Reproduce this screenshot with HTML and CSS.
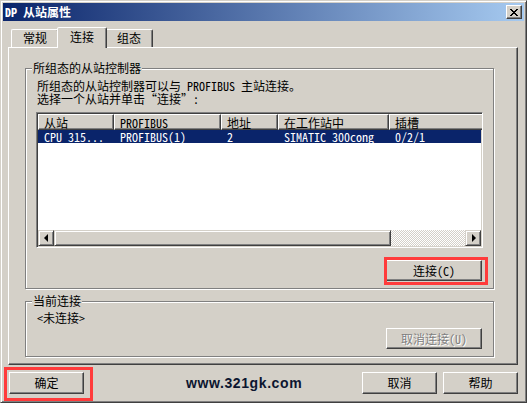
FILE: index.html
```html
<!doctype html>
<html lang="zh-CN">
  <head>
    <meta charset="UTF-8" />
    <title>DP 从站属性</title>
    <link rel="stylesheet" href="styles.css">
  </head>
  <body>
    <div class="window">
      <div class="titlebar">
        <span class="title">DP 从站属性</span>
        <span class="close">
          <svg width="8" height="7" viewBox="0 0 8 7"><path d="M0 0L7 7M7 0L0 7M1 0L8 7M8 0L1 7" stroke="#000" stroke-width="1"/></svg>
        </span>
      </div>

      <div class="tabs">
        <div class="tab tab-first">常规</div>
        <div class="tab active">连接</div>
        <div class="tab">组态</div>
      </div>

      <div class="panel">
        <div class="group group-slaves">
          <span class="legend">所组态的从站控制器</span>
          <p class="info">所组态的从站控制器可以与 PROFIBUS 主站连接。</p>
          <p class="info">选择一个从站并单击“连接”:</p>

          <div class="list">
            <div class="list-head">
              <span class="col c1">从站</span>
              <span class="col c2">PROFIBUS</span>
              <span class="col c3">地址</span>
              <span class="col c4">在工作站中</span>
              <span class="col c5">插槽</span>
            </div>
            <div class="list-row selected">
              <span class="col c1">CPU 315...</span>
              <span class="col c2">PROFIBUS(1)</span>
              <span class="col c3">2</span>
              <span class="col c4">SIMATIC 300cong</span>
              <span class="col c5">0/2/1</span>
            </div>
            <div class="list-fill"></div>
            <div class="hscroll">
              <span class="sb-btn"><i class="arrow arrow-left"></i></span>
              <span class="sb-thumb"></span>
              <span class="sb-track"></span>
              <span class="sb-btn"><i class="arrow arrow-right"></i></span>
            </div>
          </div>

          <div class="actions">
            <button class="btn btn-wide">连接(C)</button>
          </div>
        </div>

        <div class="group group-current">
          <span class="legend">当前连接</span>
          <p class="status">&lt;未连接&gt;</p>
          <div class="actions">
            <button class="btn btn-wide" disabled>取消连接(U)</button>
          </div>
        </div>
      </div>

      <div class="footer">
        <button class="btn btn-ok">确定</button>
        <span class="watermark">www.321gk.com</span>
        <button class="btn btn-cancel">取消</button>
        <button class="btn btn-help">帮助</button>
      </div>

      <!-- red annotation frames -->
      <div class="mark mark-connect"></div>
      <div class="mark mark-ok"></div>
    </div>
  </body>
</html>
```

FILE: styles.css
```css
* {
  margin: 0;
  padding: 0;
  box-sizing: border-box;
}

body {
  font-family: "Noto Sans Mono CJK SC", "Noto Sans CJK SC", sans-serif;
  font-size: 12px;
  line-height: 12px;
  color: #000;
  background: #d4d0c8;
}

.window {
  position: relative;
  width: 527px;
  height: 403px;
  padding: 2px;
  background: #d4d0c8;
  border: 1px solid;
  border-color: #d4d0c8 #404040 #404040 #d4d0c8;
  box-shadow: inset 1px 1px #fff, inset -1px -1px #808080;
}

.titlebar {
  display: flex;
  align-items: center;
  height: 18px;
  padding-left: 2px;
  background: linear-gradient(to right, #0a246a, #a6caf0);
}

.title {
  color: #fff;
  font-weight: bold;
  font-size: 12px;
}

.close {
  display: flex;
  align-items: center;
  justify-content: center;
  width: 16px;
  height: 14px;
  margin-left: auto;
  margin-right: 2px;
  background: #d4d0c8;
  border: 1px solid;
  border-color: #fff #404040 #404040 #fff;
  box-shadow: inset -1px -1px #808080;
}

/* tabs */
.tabs {
  display: flex;
  align-items: flex-end;
  height: 20px;
  margin-top: 6px;
  padding-left: 8px;
}

.tab {
  width: 48px;
  height: 18px;
  line-height: 16px;
  text-align: center;
  border: 1px solid;
  border-bottom: none;
  border-color: #fff #404040 transparent #fff;
  box-shadow: inset -1px 0 #808080;
  border-radius: 2px 2px 0 0;
}

.tab.active {
  position: relative;
  z-index: 1;
  width: 50px;
  height: 21px;
  line-height: 18px;
  margin: 0 -2px -1px;
  background: #d4d0c8;
}

/* tab page */
.panel {
  width: 510px;
  height: 318px;
  margin-left: 5px;
  padding: 20px 0 0 16px;
  border: 1px solid;
  border-color: #fff #404040 #404040 #fff;
  box-shadow: inset -1px -1px #808080;
}

.group {
  position: relative;
  width: 469px;
  padding-left: 10px;
  border: 1px solid #808080;
  box-shadow: 1px 1px 0 #fff, inset 1px 1px 0 #fff;
}

.group-slaves {
  height: 221px;
  padding-top: 10px;
}

.group-current {
  height: 56px;
  margin-top: 12px;
}

.legend {
  position: absolute;
  top: -7px;
  left: 6px;
  padding: 0 1px;
  background: #d4d0c8;
  line-height: 12px;
}

.info {
  height: 13px;
  line-height: 13px;
  padding-left: 1px;
  white-space: nowrap;
}

/* list view */
.list {
  display: flex;
  flex-direction: column;
  width: 447px;
  height: 136px;
  margin-top: 7px;
  background: #fff;
  border: 1px solid;
  border-color: #808080 #fff #fff #808080;
  box-shadow: inset 1px 1px #404040, inset -1px -1px #d4d0c8;
  padding: 1px;
  overflow: hidden;
}

.list-head,
.list-row {
  display: flex;
  white-space: nowrap;
}

.list-head {
  height: 16px;
  flex-shrink: 0;
}

.list-head .col {
  height: 16px;
  padding-top: 1px;
  line-height: 13px;
  background: #d4d0c8;
  border: 1px solid;
  border-color: #fff #404040 #404040 #fff;
  box-shadow: inset -1px -1px #808080;
}

.col {
  flex-shrink: 0;
  padding-left: 5px;
}

.c1 { width: 76px; }
.c2 { width: 107px; }
.c3 { width: 57px; }
.c4 { width: 111px; }
.c5 { width: 100px; }

.list-row {
  height: 13px;
  line-height: 13px;
  flex-shrink: 0;
}

.list-row .col {
  padding-left: 6px;
}

.list-row .c1 {
  padding-left: 4px;
  margin-left: 2px;
  width: 74px;
}

.selected {
  background: #0a246a;
  color: #fff;
}

.list-fill {
  flex: 1;
}

.hscroll {
  display: flex;
  height: 16px;
  flex-shrink: 0;
}

.sb-btn,
.sb-thumb {
  background: #d4d0c8;
  border: 1px solid;
  border-color: #d4d0c8 #404040 #404040 #d4d0c8;
  box-shadow: inset 1px 1px #fff, inset -1px -1px #808080;
}

.sb-btn {
  display: flex;
  align-items: center;
  justify-content: center;
  width: 16px;
}

.sb-thumb {
  width: 337px;
}

.sb-track {
  flex: 1;
  background: repeating-conic-gradient(#fff 0 25%, #d4d0c8 0 50%) 0 0 / 2px 2px;
}

.arrow {
  width: 0;
  height: 0;
  border-top: 4px solid transparent;
  border-bottom: 4px solid transparent;
}

.arrow-left {
  border-right: 4px solid #000;
  margin-right: 1px;
}

.arrow-right {
  border-left: 4px solid #000;
  margin-left: 1px;
}

/* buttons */
.actions {
  display: flex;
  justify-content: flex-end;
  width: 447px;
  padding-right: 1px;
}

.group-slaves .actions {
  margin-top: 12px;
}

.status {
  margin-top: 10px;
  padding-left: 1px;
}

.group-current .actions {
  margin-top: 4px;
}

.btn {
  height: 21px;
  font: inherit;
  background: #d4d0c8;
  border: 1px solid;
  border-color: #fff #404040 #404040 #fff;
  box-shadow: inset -1px -1px #808080;
  color: #000;
}

.btn-wide {
  width: 96px;
}

.btn:disabled {
  color: #808080;
  text-shadow: 1px 1px #fff;
}

/* footer */
.footer {
  display: flex;
  align-items: center;
  height: 22px;
  margin-top: 7px;
}

.footer .btn {
  width: 75px;
  height: 22px;
}

.btn-ok {
  margin-left: 6px;
}

.watermark {
  margin-left: 102px;
  font-family: "Liberation Sans", Arial, sans-serif;
  font-weight: bold;
  font-size: 14px;
  line-height: 16px;
  letter-spacing: 0.6px;
  color: #0c1630;
}

.btn-cancel {
  margin-left: auto;
}

.btn-help {
  margin-left: 6px;
  margin-right: 6px;
}

.mark {
  position: absolute;
  border: 3px solid #ff3b3b;
}

.mark-connect {
  left: 383px;
  top: 256px;
  width: 104px;
  height: 28px;
}

.mark-ok {
  left: 3px;
  top: 366px;
  width: 89px;
  height: 34px;
}
```
